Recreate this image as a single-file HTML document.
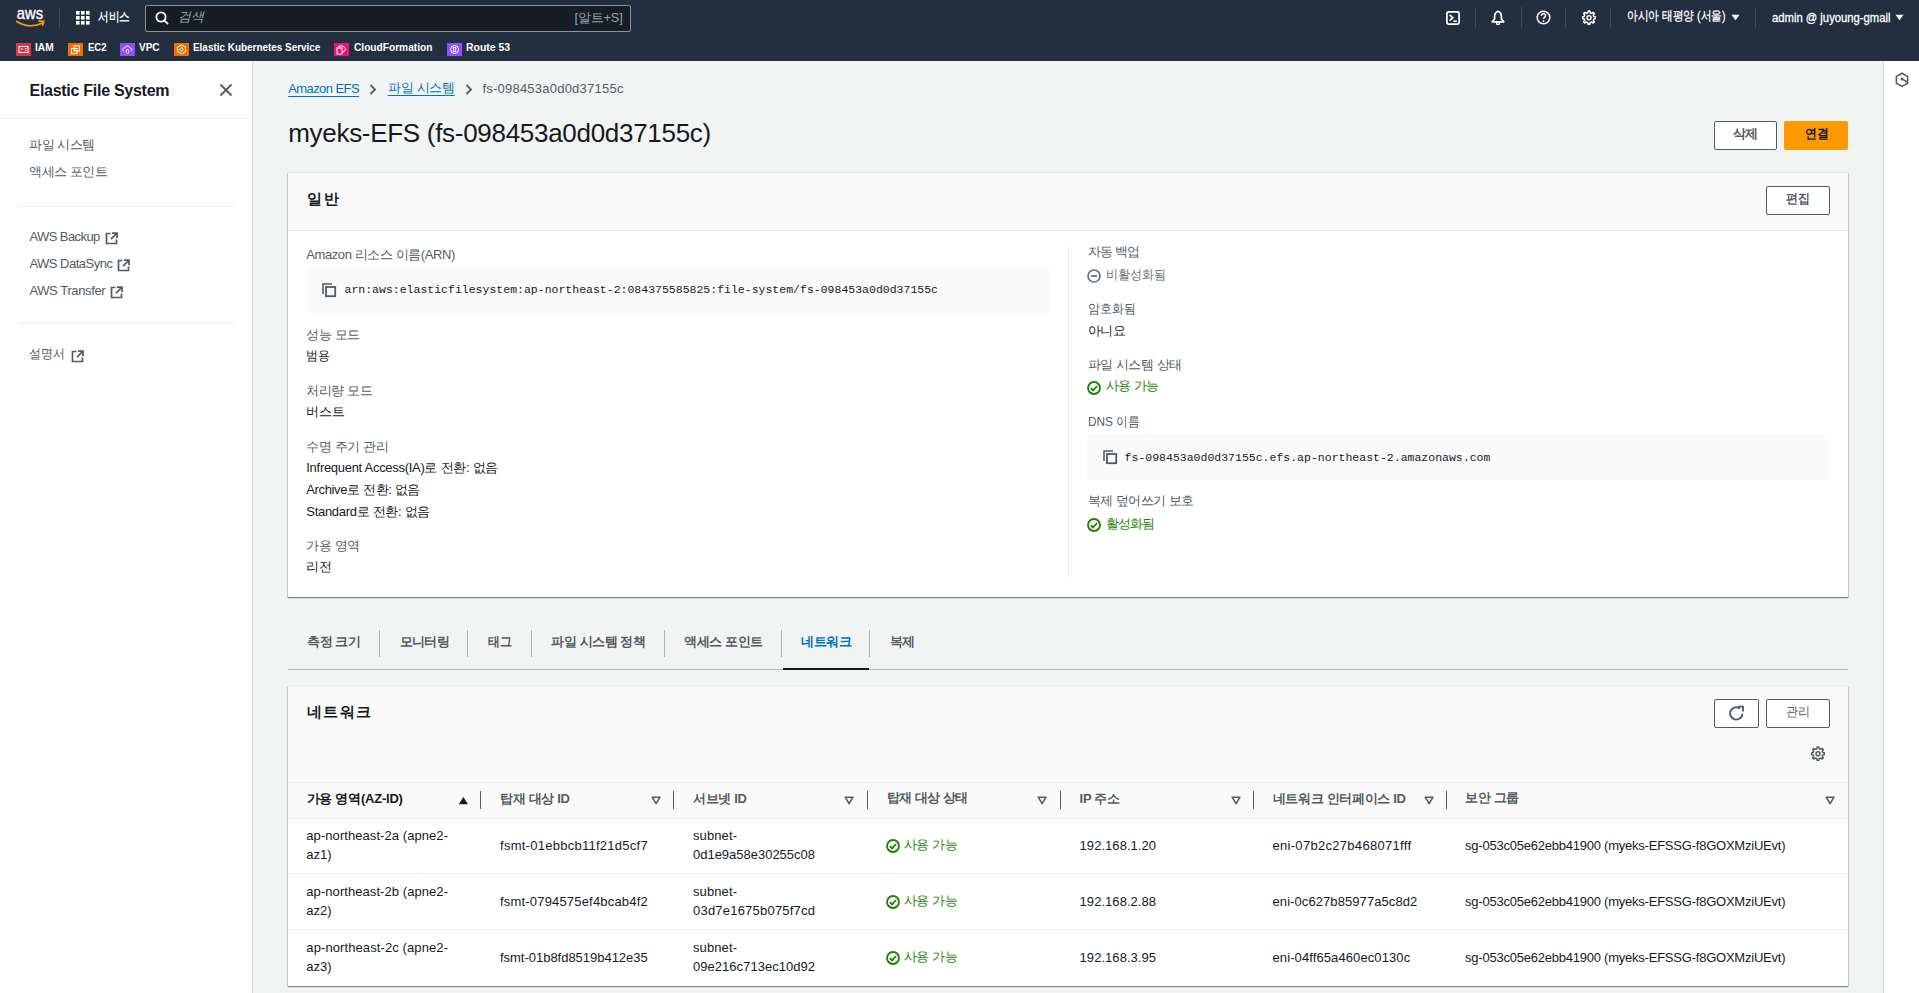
<!DOCTYPE html><html><head><meta charset="utf-8"><title>EFS</title><style>html,body{margin:0;padding:0;width:1919px;height:993px;overflow:hidden;background:#f2f3f3;font-family:"Liberation Sans",sans-serif}.t{position:absolute;white-space:nowrap}.b{position:absolute;display:block}</style></head><body><div class="b" style="left:0px;top:0px;width:1919px;height:61px;background:#232f3e"></div>
<div class="b" style="left:0px;top:61px;width:1919px;height:1px;background:rgba(35,47,62,0.5)"></div>
<svg class="b" style="left:16px;top:4px;" width="30" height="26" viewBox="0 0 30 26"><text x="0.8" y="14.9" fill="#fff" font-family="Liberation Sans" font-size="17" stroke="#fff" stroke-width="0.35" textLength="26.2" lengthAdjust="spacingAndGlyphs">aws</text><path d="M0.6 17.4 Q13.5 25.2 26.6 19" stroke="#ff9900" stroke-width="1.7" fill="none" stroke-linecap="round"/><path d="M22.9 17.1 L28 17.4 L26.6 21.3" stroke="#ff9900" stroke-width="1.6" fill="none" stroke-linecap="round" stroke-linejoin="round"/></svg>
<div class="b" style="left:59px;top:8px;width:1px;height:20px;background:#414d5c"></div>
<svg class="b" style="left:76px;top:11px;" width="14" height="14" viewBox="0 0 14 14"><rect x="0" y="0" width="3.6" height="3.6" fill="#fff"/><rect x="5" y="0" width="3.6" height="3.6" fill="#fff"/><rect x="10" y="0" width="3.6" height="3.6" fill="#fff"/><rect x="0" y="5" width="3.6" height="3.6" fill="#fff"/><rect x="5" y="5" width="3.6" height="3.6" fill="#fff"/><rect x="10" y="5" width="3.6" height="3.6" fill="#fff"/><rect x="0" y="10" width="3.6" height="3.6" fill="#fff"/><rect x="5" y="10" width="3.6" height="3.6" fill="#fff"/><rect x="10" y="10" width="3.6" height="3.6" fill="#fff"/></svg>
<div id="t1" class="t" style="left:98px;top:9.70px;font-size:13px;line-height:13px;font-weight:normal;color:#fff;font-family:'Liberation Sans', sans-serif;-webkit-text-stroke:0.3px #fff;transform:scaleX(0.8205);transform-origin:0 0;">서비스</div>
<div class="b" style="left:145px;top:5px;width:486px;height:27px;background:#161d26;border:1px solid #879596;border-radius:2px;box-sizing:border-box"></div>
<svg class="b" style="left:155px;top:11px;" width="14" height="14" viewBox="0 0 14 14"><circle cx="6" cy="6" r="4.6" stroke="#fff" stroke-width="1.8" fill="none"/><path d="M9.4 9.4 L12.6 12.6" stroke="#fff" stroke-width="1.8" stroke-linecap="round"/></svg>
<div id="t2" class="t" style="left:178px;top:9.70px;font-size:13px;line-height:13px;font-weight:normal;color:#95a5a6;font-family:'Liberation Sans', sans-serif;font-style:italic;letter-spacing:-0.400px;">검색</div>
<div id="t3" class="t" style="left:574.4px;top:11.30px;font-size:13px;line-height:13px;font-weight:normal;color:#95a5a6;font-family:'Liberation Sans', sans-serif;letter-spacing:-0.200px;">[알트+S]</div>
<svg class="b" style="left:1446px;top:11px;" width="14" height="14" viewBox="0 0 14 14"><rect x="0.9" y="0.9" width="12.2" height="12.2" rx="1.6" stroke="#fff" stroke-width="1.7" fill="none"/><path d="M3.6 3.9 L6.9 6.8 L3.6 9.7" stroke="#fff" stroke-width="1.6" fill="none"/><path d="M7.4 10.2 H10.8" stroke="#fff" stroke-width="1.6"/></svg>
<div class="b" style="left:1475px;top:8px;width:1px;height:20px;background:#414d5c"></div>
<svg class="b" style="left:1491px;top:10px;" width="14" height="15" viewBox="0 0 14 15"><path d="M7 1.3 C4.6 2.2 3.6 4.2 3.6 6.6 V9 L1.2 11.8 H12.8 L10.4 9 V6.6 C10.4 4.2 9.4 2.2 7 1.3 Z" stroke="#fff" stroke-width="1.7" fill="none" stroke-linejoin="round"/><circle cx="7" cy="13.1" r="1.5" stroke="#fff" stroke-width="1.4" fill="none"/></svg>
<div class="b" style="left:1521px;top:7px;width:1px;height:21px;background:#414d5c"></div>
<svg class="b" style="left:1536px;top:10px;" width="15" height="15" viewBox="0 0 15 15"><circle cx="7.5" cy="7.5" r="6.3" stroke="#fff" stroke-width="1.6" fill="none"/><path d="M5.4 5.8 C5.4 3.2 9.6 3.2 9.6 5.6 C9.6 7.3 7.5 7.3 7.5 9" stroke="#fff" stroke-width="1.5" fill="none"/><circle cx="7.5" cy="11.2" r="0.9" fill="#fff"/></svg>
<div class="b" style="left:1565px;top:8px;width:1px;height:20px;background:#414d5c"></div>
<svg class="b" style="left:1582px;top:10px;" width="14" height="16" viewBox="0 0 14 16"><path d="M6.2 1 H7.8 L8.2 2.8 L9.6 3.4 L11.2 2.4 L12.3 3.5 L11.3 5.1 L11.9 6.5 L13.6 6.9 V8.5 L11.9 8.9 L11.3 10.3 L12.3 11.9 L11.2 13 L9.6 12 L8.2 12.6 L7.8 14.3 H6.2 L5.8 12.6 L4.4 12 L2.8 13 L1.7 11.9 L2.7 10.3 L2.1 8.9 L0.4 8.5 V6.9 L2.1 6.5 L2.7 5.1 L1.7 3.5 L2.8 2.4 L4.4 3.4 L5.8 2.8 Z" stroke="#fff" stroke-width="1.5" fill="none" stroke-linejoin="round"/><circle cx="7" cy="7.65" r="2" stroke="#fff" stroke-width="1.5" fill="none"/></svg>
<div class="b" style="left:1610px;top:8px;width:1px;height:20px;background:#414d5c"></div>
<div id="t4" class="t" style="left:1627.4px;top:9.20px;font-size:13px;line-height:13px;font-weight:normal;color:#fff;font-family:'Liberation Sans', sans-serif;-webkit-text-stroke:0.3px #fff;transform:scaleX(0.8224);transform-origin:0 0;">아시아 태평양 (서울)</div>
<svg class="b" style="left:1731px;top:14px;" width="9" height="7" viewBox="0 0 9 7"><path d="M0.5 0.8 H8.5 L4.5 6.2 Z" fill="#fff"/></svg>
<div class="b" style="left:1755px;top:8px;width:1px;height:20px;background:#414d5c"></div>
<div id="t5" class="t" style="left:1771.5px;top:11.00px;font-size:13px;line-height:13px;font-weight:normal;color:#fff;font-family:'Liberation Sans', sans-serif;-webkit-text-stroke:0.3px #fff;transform:scaleX(0.8664);transform-origin:0 0;">admin @ juyoung-gmail</div>
<svg class="b" style="left:1895px;top:14px;" width="9" height="7" viewBox="0 0 9 7"><path d="M0.5 0.8 H8.5 L4.5 6.2 Z" fill="#fff"/></svg>
<svg class="b" style="left:16px;top:43px;" width="15" height="13" viewBox="0 0 15 13"><rect width="15" height="13" fill="#dd344c"/><rect x="3" y="3.5" width="9" height="6" stroke="#fff" stroke-width="1" fill="none"/><path d="M5 6 H7 M9 5.5 H10.5 M9 7.5 H10.5" stroke="#fff" stroke-width="0.9"/></svg>
<div id="t6" class="t" style="left:35.4px;top:42.27px;font-size:11.5px;line-height:11.5px;font-weight:bold;color:#fff;font-family:'Liberation Sans', sans-serif;transform:scaleX(0.8818);transform-origin:0 0;">IAM</div>
<svg class="b" style="left:68px;top:43px;" width="15" height="13" viewBox="0 0 15 13"><rect width="15" height="13" fill="#ed7100"/><rect x="6" y="3" width="5.5" height="5" stroke="#fff" stroke-width="1" fill="none"/><rect x="3.5" y="5.5" width="5.5" height="5" stroke="#fff" stroke-width="1" fill="none"/></svg>
<div id="t7" class="t" style="left:87.5px;top:42.27px;font-size:11.5px;line-height:11.5px;font-weight:bold;color:#fff;font-family:'Liberation Sans', sans-serif;transform:scaleX(0.8268);transform-origin:0 0;">EC2</div>
<svg class="b" style="left:120px;top:43px;" width="15" height="13" viewBox="0 0 15 13"><rect width="15" height="13" fill="#8c4fff"/><path d="M4 8 C2 8 2 5 4.5 5 C5 2.5 9.5 2.5 10 5 C12.5 5 12.5 8 10.5 8" stroke="#fff" stroke-width="1" fill="none"/><rect x="6.3" y="6.5" width="2.4" height="4" rx="1" stroke="#fff" stroke-width="0.9" fill="none"/></svg>
<div id="t8" class="t" style="left:139px;top:42.27px;font-size:11.5px;line-height:11.5px;font-weight:bold;color:#fff;font-family:'Liberation Sans', sans-serif;transform:scaleX(0.8708);transform-origin:0 0;">VPC</div>
<svg class="b" style="left:174px;top:43px;" width="15" height="13" viewBox="0 0 15 13"><rect width="15" height="13" fill="#ed7100"/><path d="M7.5 2 L11.5 4.2 V8.8 L7.5 11 L3.5 8.8 V4.2 Z" stroke="#fff" stroke-width="1" fill="none"/><circle cx="7.5" cy="6.5" r="1.6" stroke="#fff" stroke-width="0.9" fill="none"/></svg>
<div id="t9" class="t" style="left:192.8px;top:42.27px;font-size:11.5px;line-height:11.5px;font-weight:bold;color:#fff;font-family:'Liberation Sans', sans-serif;transform:scaleX(0.8627);transform-origin:0 0;">Elastic Kubernetes Service</div>
<svg class="b" style="left:334px;top:43px;" width="15" height="13" viewBox="0 0 15 13"><rect width="15" height="13" fill="#e7157b"/><rect x="3" y="5" width="5" height="6" stroke="#fff" stroke-width="1" fill="none"/><path d="M5 5 V3 H9 L12 6.5 L9 9 H8" stroke="#fff" stroke-width="1" fill="none"/></svg>
<div id="t10" class="t" style="left:353.6px;top:42.27px;font-size:11.5px;line-height:11.5px;font-weight:bold;color:#fff;font-family:'Liberation Sans', sans-serif;transform:scaleX(0.8829);transform-origin:0 0;">CloudFormation</div>
<svg class="b" style="left:447px;top:43px;" width="15" height="13" viewBox="0 0 15 13"><rect width="15" height="13" fill="#8c4fff"/><circle cx="7.5" cy="6.5" r="4" stroke="#fff" stroke-width="1" fill="none"/><rect x="6.3" y="4.5" width="2.4" height="4" stroke="#fff" stroke-width="0.9" fill="none"/></svg>
<div id="t11" class="t" style="left:465.7px;top:42.27px;font-size:11.5px;line-height:11.5px;font-weight:bold;color:#fff;font-family:'Liberation Sans', sans-serif;transform:scaleX(0.9099);transform-origin:0 0;">Route 53</div>
<div class="b" style="left:0px;top:61px;width:252px;height:932px;background:#fff"></div>
<div class="b" style="left:252px;top:61px;width:1px;height:932px;background:#d5dbdb"></div>
<div id="t12" class="t" style="left:29.5px;top:82.96px;font-size:16px;line-height:16px;font-weight:bold;color:#16191f;font-family:'Liberation Sans', sans-serif;letter-spacing:-0.276px;">Elastic File System</div>
<svg class="b" style="left:219px;top:83px;" width="14" height="14" viewBox="0 0 14 14"><path d="M1.5 1.5 L12.5 12.5 M12.5 1.5 L1.5 12.5" stroke="#545b64" stroke-width="1.8"/></svg>
<div class="b" style="left:0px;top:118px;width:252px;height:1px;background:#eaeded"></div>
<div id="t13" class="t" style="left:29.4px;top:138.20px;font-size:13px;line-height:13px;font-weight:normal;color:#545b64;font-family:'Liberation Sans', sans-serif;letter-spacing:-0.605px;">파일 시스템</div>
<div id="t14" class="t" style="left:29.4px;top:165.20px;font-size:13px;line-height:13px;font-weight:normal;color:#545b64;font-family:'Liberation Sans', sans-serif;letter-spacing:-0.504px;">액세스 포인트</div>
<div class="b" style="left:18px;top:206px;width:216px;height:1px;background:#eaeded"></div>
<div id="t15" class="t" style="left:29.4px;top:230.00px;font-size:13px;line-height:13px;font-weight:normal;color:#545b64;font-family:'Liberation Sans', sans-serif;letter-spacing:-0.579px;">AWS Backup</div>
<svg class="b" style="left:105px;top:232px;" width="13" height="13" viewBox="0 0 13 13"><path d="M5.5 1.5 H1.5 V11.5 H11.5 V7.5" stroke="#545b64" stroke-width="1.7" fill="none"/><path d="M7 1.2 H12 V6.2 M11.8 1.4 L6 7.2" stroke="#545b64" stroke-width="1.7" fill="none"/></svg>
<div id="t16" class="t" style="left:29.4px;top:257.00px;font-size:13px;line-height:13px;font-weight:normal;color:#545b64;font-family:'Liberation Sans', sans-serif;letter-spacing:-0.510px;">AWS DataSync</div>
<svg class="b" style="left:117px;top:259px;" width="13" height="13" viewBox="0 0 13 13"><path d="M5.5 1.5 H1.5 V11.5 H11.5 V7.5" stroke="#545b64" stroke-width="1.7" fill="none"/><path d="M7 1.2 H12 V6.2 M11.8 1.4 L6 7.2" stroke="#545b64" stroke-width="1.7" fill="none"/></svg>
<div id="t17" class="t" style="left:29.4px;top:284.00px;font-size:13px;line-height:13px;font-weight:normal;color:#545b64;font-family:'Liberation Sans', sans-serif;letter-spacing:-0.385px;">AWS Transfer</div>
<svg class="b" style="left:110px;top:286px;" width="13" height="13" viewBox="0 0 13 13"><path d="M5.5 1.5 H1.5 V11.5 H11.5 V7.5" stroke="#545b64" stroke-width="1.7" fill="none"/><path d="M7 1.2 H12 V6.2 M11.8 1.4 L6 7.2" stroke="#545b64" stroke-width="1.7" fill="none"/></svg>
<div class="b" style="left:18px;top:323px;width:216px;height:1px;background:#eaeded"></div>
<div id="t18" class="t" style="left:29.4px;top:347.20px;font-size:13px;line-height:13px;font-weight:normal;color:#545b64;font-family:'Liberation Sans', sans-serif;transform:scaleX(0.9231);transform-origin:0 0;">설명서</div>
<svg class="b" style="left:71px;top:350px;" width="13" height="13" viewBox="0 0 13 13"><path d="M5.5 1.5 H1.5 V11.5 H11.5 V7.5" stroke="#545b64" stroke-width="1.7" fill="none"/><path d="M7 1.2 H12 V6.2 M11.8 1.4 L6 7.2" stroke="#545b64" stroke-width="1.7" fill="none"/></svg>
<div class="b" style="left:253px;top:61px;width:1630px;height:932px;background:#f2f3f3"></div>
<div class="b" style="left:1883px;top:61px;width:1px;height:932px;background:#d5dbdb"></div>
<div class="b" style="left:1884px;top:61px;width:35px;height:932px;background:#fff"></div>
<svg class="b" style="left:1895px;top:72px;" width="14" height="16" viewBox="0 0 14 16"><path d="M7 1.2 L12.6 4.4 V11.2 L7 14.4 L1.4 11.2 V4.4 Z" stroke="#545b64" stroke-width="1.6" fill="none" stroke-linejoin="round"/><circle cx="7" cy="6.9" r="1.5" fill="#545b64"/><path d="M7 6.9 L12 10" stroke="#545b64" stroke-width="1.5"/></svg>
<div id="t19" class="t" style="left:288.2px;top:82.00px;font-size:13px;line-height:13px;font-weight:normal;color:#0073bb;font-family:'Liberation Sans', sans-serif;text-decoration:underline;text-underline-offset:3px;letter-spacing:-0.577px;">Amazon EFS</div>
<svg class="b" style="left:369px;top:84px;" width="8" height="11" viewBox="0 0 8 11"><path d="M1.5 1 L6 5.5 L1.5 10" stroke="#545b64" stroke-width="1.8" fill="none"/></svg>
<div id="t20" class="t" style="left:387.8px;top:80.70px;font-size:13px;line-height:13px;font-weight:normal;color:#0073bb;font-family:'Liberation Sans', sans-serif;text-decoration:underline;text-underline-offset:3px;letter-spacing:-0.285px;">파일 시스템</div>
<svg class="b" style="left:464.5px;top:84px;" width="8" height="11" viewBox="0 0 8 11"><path d="M1.5 1 L6 5.5 L1.5 10" stroke="#545b64" stroke-width="1.8" fill="none"/></svg>
<div id="t21" class="t" style="left:482.4px;top:82.00px;font-size:13px;line-height:13px;font-weight:normal;color:#545b64;font-family:'Liberation Sans', sans-serif;letter-spacing:0.230px;">fs-098453a0d0d37155c</div>
<div id="t22" class="t" style="left:288.2px;top:120.49px;font-size:26px;line-height:26px;font-weight:normal;color:#16191f;font-family:'Liberation Sans', sans-serif;letter-spacing:-0.294px;">myeks-EFS (fs-098453a0d0d37155c)</div>
<div class="b" style="left:1714px;top:121px;width:63px;height:29px;background:#fff;border:1px solid #545b64;border-radius:2px;box-sizing:border-box"></div>
<div id="t23" class="t" style="left:1733.2px;top:126.70px;font-size:13px;line-height:13px;font-weight:bold;color:#545b64;font-family:'Liberation Sans', sans-serif;letter-spacing:-0.700px;">삭제</div>
<div class="b" style="left:1784px;top:121px;width:64px;height:29px;background:#ff9900;border-radius:2px"></div>
<div id="t24" class="t" style="left:1804.6px;top:126.70px;font-size:13px;line-height:13px;font-weight:bold;color:#16191f;font-family:'Liberation Sans', sans-serif;transform:scaleX(0.9115);transform-origin:0 0;">연결</div>
<div class="b" style="left:288px;top:172px;width:1560px;height:425px;background:#fff;box-shadow:0 1px 1px 0 rgba(0,28,36,.3),1px 1px 1px 0 rgba(0,28,36,.15),-1px 1px 1px 0 rgba(0,28,36,.15);border-top:1px solid #eaeded;box-sizing:border-box;"></div>
<div class="b" style="left:288px;top:173px;width:1560px;height:57px;background:#fafafa"></div>
<div class="b" style="left:288px;top:230px;width:1560px;height:1px;background:#eaeded"></div>
<div id="t25" class="t" style="left:307.2px;top:192.22px;font-size:14.5px;line-height:14.5px;font-weight:bold;color:#16191f;font-family:'Liberation Sans', sans-serif;letter-spacing:1.700px;">일반</div>
<div class="b" style="left:1766px;top:186px;width:64px;height:29px;background:#fff;border:1px solid #545b64;border-radius:2px;box-sizing:border-box"></div>
<div id="t26" class="t" style="left:1785.5px;top:191.70px;font-size:13px;line-height:13px;font-weight:bold;color:#545b64;font-family:'Liberation Sans', sans-serif;transform:scaleX(0.9231);transform-origin:0 0;">편집</div>
<div id="t27" class="t" style="left:306.3px;top:247.50px;font-size:13px;line-height:13px;font-weight:normal;color:#545b64;font-family:'Liberation Sans', sans-serif;letter-spacing:-0.414px;">Amazon 리소스 이름(ARN)</div>
<div class="b" style="left:306px;top:267px;width:744px;height:46px;background:#fafafa;border-radius:4px"></div>
<svg class="b" style="left:322px;top:283px;" width="15" height="15" viewBox="0 0 15 15"><path d="M1 11 V1 H10" stroke="#545b64" stroke-width="1.6" fill="none"/><rect x="4" y="4" width="9.2" height="9.2" stroke="#545b64" stroke-width="1.8" fill="none"/></svg>
<div id="t28" class="t" style="left:344.5px;top:283.79px;font-size:11.5px;line-height:11.5px;font-weight:normal;color:#16191f;font-family:'Liberation Mono', monospace;">arn:aws:elasticfilesystem:ap-northeast-2:084375585825:file-system/fs-098453a0d0d37155c</div>
<div id="t29" class="t" style="left:306.3px;top:327.70px;font-size:13px;line-height:13px;font-weight:normal;color:#545b64;font-family:'Liberation Sans', sans-serif;letter-spacing:-0.406px;">성능 모드</div>
<div id="t30" class="t" style="left:306.3px;top:349.20px;font-size:13px;line-height:13px;font-weight:normal;color:#16191f;font-family:'Liberation Sans', sans-serif;transform:scaleX(0.9231);transform-origin:0 0;">범용</div>
<div id="t31" class="t" style="left:306.3px;top:384.20px;font-size:13px;line-height:13px;font-weight:normal;color:#545b64;font-family:'Liberation Sans', sans-serif;letter-spacing:-0.425px;">처리량 모드</div>
<div id="t32" class="t" style="left:306.3px;top:405.20px;font-size:13px;line-height:13px;font-weight:normal;color:#16191f;font-family:'Liberation Sans', sans-serif;letter-spacing:-0.250px;">버스트</div>
<div id="t33" class="t" style="left:306.3px;top:440.20px;font-size:13px;line-height:13px;font-weight:normal;color:#545b64;font-family:'Liberation Sans', sans-serif;letter-spacing:-0.391px;">수명 주기 관리</div>
<div id="t34" class="t" style="left:306.3px;top:461.00px;font-size:13px;line-height:13px;font-weight:normal;color:#16191f;font-family:'Liberation Sans', sans-serif;letter-spacing:-0.290px;">Infrequent Access(IA)로 전환: 없음</div>
<div id="t35" class="t" style="left:306.3px;top:483.00px;font-size:13px;line-height:13px;font-weight:normal;color:#16191f;font-family:'Liberation Sans', sans-serif;letter-spacing:-0.371px;">Archive로 전환: 없음</div>
<div id="t36" class="t" style="left:306.3px;top:504.50px;font-size:13px;line-height:13px;font-weight:normal;color:#16191f;font-family:'Liberation Sans', sans-serif;letter-spacing:-0.307px;">Standard로 전환: 없음</div>
<div id="t37" class="t" style="left:306.3px;top:539.20px;font-size:13px;line-height:13px;font-weight:normal;color:#545b64;font-family:'Liberation Sans', sans-serif;letter-spacing:-0.406px;">가용 영역</div>
<div id="t38" class="t" style="left:306.3px;top:560.20px;font-size:13px;line-height:13px;font-weight:normal;color:#16191f;font-family:'Liberation Sans', sans-serif;letter-spacing:-0.700px;">리전</div>
<div class="b" style="left:1068px;top:245px;width:1px;height:333px;background:#eaeded"></div>
<div id="t39" class="t" style="left:1087.5px;top:245.20px;font-size:13px;line-height:13px;font-weight:normal;color:#545b64;font-family:'Liberation Sans', sans-serif;letter-spacing:-0.656px;">자동 백업</div>
<svg class="b" style="left:1087px;top:269px;" width="14" height="14" viewBox="0 0 14 14"><circle cx="7" cy="7" r="6" stroke="#687078" stroke-width="1.7" fill="none"/><path d="M4 7 H10" stroke="#687078" stroke-width="1.8"/></svg>
<div id="t40" class="t" style="left:1105.8px;top:267.50px;font-size:13px;line-height:13px;font-weight:normal;color:#687078;font-family:'Liberation Sans', sans-serif;transform:scaleX(0.9292);transform-origin:0 0;">비활성화됨</div>
<div id="t41" class="t" style="left:1087.5px;top:301.70px;font-size:13px;line-height:13px;font-weight:normal;color:#545b64;font-family:'Liberation Sans', sans-serif;transform:scaleX(0.9231);transform-origin:0 0;">암호화됨</div>
<div id="t42" class="t" style="left:1087.5px;top:323.70px;font-size:13px;line-height:13px;font-weight:normal;color:#16191f;font-family:'Liberation Sans', sans-serif;letter-spacing:-0.500px;">아니요</div>
<div id="t43" class="t" style="left:1087.5px;top:357.70px;font-size:13px;line-height:13px;font-weight:normal;color:#545b64;font-family:'Liberation Sans', sans-serif;letter-spacing:-0.454px;">파일 시스템 상태</div>
<svg class="b" style="left:1087px;top:381px;" width="14" height="14" viewBox="0 0 14 14"><circle cx="7" cy="7" r="6" stroke="#1d8102" stroke-width="1.8" fill="none"/><path d="M3.8 7.2 L6 9.4 L10.2 5" stroke="#1d8102" stroke-width="1.8" fill="none"/></svg>
<div id="t44" class="t" style="left:1105.5px;top:378.70px;font-size:13px;line-height:13px;font-weight:normal;color:#1d8102;font-family:'Liberation Sans', sans-serif;letter-spacing:-0.456px;">사용 가능</div>
<div id="t45" class="t" style="left:1087.5px;top:414.50px;font-size:13px;line-height:13px;font-weight:normal;color:#545b64;font-family:'Liberation Sans', sans-serif;transform:scaleX(0.9113);transform-origin:0 0;">DNS 이름</div>
<div class="b" style="left:1087px;top:434px;width:743px;height:46px;background:#fafafa;border-radius:4px"></div>
<svg class="b" style="left:1103px;top:450px;" width="15" height="15" viewBox="0 0 15 15"><path d="M1 11 V1 H10" stroke="#545b64" stroke-width="1.6" fill="none"/><rect x="4" y="4" width="9.2" height="9.2" stroke="#545b64" stroke-width="1.8" fill="none"/></svg>
<div id="t46" class="t" style="left:1124.6px;top:451.79px;font-size:11.5px;line-height:11.5px;font-weight:normal;color:#16191f;font-family:'Liberation Mono', monospace;">fs-098453a0d0d37155c.efs.ap-northeast-2.amazonaws.com</div>
<div id="t47" class="t" style="left:1087.5px;top:494.20px;font-size:13px;line-height:13px;font-weight:normal;color:#545b64;font-family:'Liberation Sans', sans-serif;letter-spacing:-0.515px;">복제 덮어쓰기 보호</div>
<svg class="b" style="left:1087px;top:518px;" width="14" height="14" viewBox="0 0 14 14"><circle cx="7" cy="7" r="6" stroke="#1d8102" stroke-width="1.8" fill="none"/><path d="M3.8 7.2 L6 9.4 L10.2 5" stroke="#1d8102" stroke-width="1.8" fill="none"/></svg>
<div id="t48" class="t" style="left:1105.8px;top:516.70px;font-size:13px;line-height:13px;font-weight:normal;color:#1d8102;font-family:'Liberation Sans', sans-serif;letter-spacing:-0.767px;">활성화됨</div>
<div id="t49" class="t" style="left:307.4px;top:634.70px;font-size:13px;line-height:13px;font-weight:bold;color:#545b64;font-family:'Liberation Sans', sans-serif;letter-spacing:-0.506px;">측정 크기</div>
<div id="t50" class="t" style="left:399.7px;top:634.70px;font-size:13px;line-height:13px;font-weight:bold;color:#545b64;font-family:'Liberation Sans', sans-serif;letter-spacing:-0.600px;">모니터링</div>
<div id="t51" class="t" style="left:488.3px;top:634.70px;font-size:13px;line-height:13px;font-weight:bold;color:#545b64;font-family:'Liberation Sans', sans-serif;transform:scaleX(0.9192);transform-origin:0 0;">태그</div>
<div id="t52" class="t" style="left:551.3px;top:634.70px;font-size:13px;line-height:13px;font-weight:bold;color:#545b64;font-family:'Liberation Sans', sans-serif;letter-spacing:-0.442px;">파일 시스템 정책</div>
<div id="t53" class="t" style="left:684.2px;top:634.70px;font-size:13px;line-height:13px;font-weight:bold;color:#545b64;font-family:'Liberation Sans', sans-serif;letter-spacing:-0.421px;">액세스 포인트</div>
<div id="t54" class="t" style="left:801.4px;top:634.70px;font-size:13px;line-height:13px;font-weight:bold;color:#0073bb;font-family:'Liberation Sans', sans-serif;letter-spacing:-0.467px;">네트워크</div>
<div id="t55" class="t" style="left:889.7px;top:634.70px;font-size:13px;line-height:13px;font-weight:bold;color:#545b64;font-family:'Liberation Sans', sans-serif;letter-spacing:-0.300px;">복제</div>
<div class="b" style="left:379px;top:630px;width:1px;height:27px;background:#aab7b8"></div>
<div class="b" style="left:467px;top:630px;width:1px;height:27px;background:#aab7b8"></div>
<div class="b" style="left:531px;top:630px;width:1px;height:27px;background:#aab7b8"></div>
<div class="b" style="left:664px;top:630px;width:1px;height:27px;background:#aab7b8"></div>
<div class="b" style="left:781px;top:630px;width:1px;height:27px;background:#aab7b8"></div>
<div class="b" style="left:869px;top:630px;width:1px;height:27px;background:#aab7b8"></div>
<div class="b" style="left:288px;top:669px;width:1560px;height:1px;background:#aab7b8"></div>
<div class="b" style="left:783px;top:668px;width:86px;height:2px;background:#16191f"></div>
<div class="b" style="left:288px;top:686px;width:1560px;height:300px;background:#fff;box-shadow:0 1px 1px 0 rgba(0,28,36,.3),1px 1px 1px 0 rgba(0,28,36,.15),-1px 1px 1px 0 rgba(0,28,36,.15);border-top:1px solid #eaeded;box-sizing:border-box;"></div>
<div class="b" style="left:288px;top:687px;width:1560px;height:131px;background:#fafafa"></div>
<div id="t56" class="t" style="left:306.9px;top:705.22px;font-size:14.5px;line-height:14.5px;font-weight:bold;color:#16191f;font-family:'Liberation Sans', sans-serif;letter-spacing:1.333px;">네트워크</div>
<div class="b" style="left:1714px;top:699px;width:45px;height:29px;background:#fff;border:1px solid #545b64;border-radius:2px;box-sizing:border-box"></div>
<svg class="b" style="left:1729px;top:705px;" width="16" height="16" viewBox="0 0 16 16"><path d="M13.5 8.6 A6.2 6.2 0 1 1 11.2 3.6" stroke="#545b64" stroke-width="1.9" fill="none"/><path d="M9.2 1.6 H14 V6.4" stroke="#545b64" stroke-width="1.9" fill="none"/></svg>
<div class="b" style="left:1766px;top:699px;width:64px;height:29px;background:#fff;border:1px solid #545b64;border-radius:2px;box-sizing:border-box"></div>
<div id="t57" class="t" style="left:1785.8px;top:705.20px;font-size:13px;line-height:13px;font-weight:normal;color:#545b64;font-family:'Liberation Sans', sans-serif;transform:scaleX(0.9308);transform-origin:0 0;">관리</div>
<svg class="b" style="left:1811px;top:746px;" width="14" height="16" viewBox="0 0 14 16"><path d="M6.2 1 H7.8 L8.2 2.8 L9.6 3.4 L11.2 2.4 L12.3 3.5 L11.3 5.1 L11.9 6.5 L13.6 6.9 V8.5 L11.9 8.9 L11.3 10.3 L12.3 11.9 L11.2 13 L9.6 12 L8.2 12.6 L7.8 14.3 H6.2 L5.8 12.6 L4.4 12 L2.8 13 L1.7 11.9 L2.7 10.3 L2.1 8.9 L0.4 8.5 V6.9 L2.1 6.5 L2.7 5.1 L1.7 3.5 L2.8 2.4 L4.4 3.4 L5.8 2.8 Z" stroke="#545b64" stroke-width="1.5" fill="none" stroke-linejoin="round"/><circle cx="7" cy="7.65" r="2" stroke="#545b64" stroke-width="1.5" fill="none"/></svg>
<div class="b" style="left:288px;top:782px;width:1560px;height:1px;background:#eaeded"></div>
<div class="b" style="left:288px;top:818px;width:1560px;height:1px;background:#eaeded"></div>
<div id="t58" class="t" style="left:306.6px;top:792.20px;font-size:13px;line-height:13px;font-weight:bold;color:#16191f;font-family:'Liberation Sans', sans-serif;letter-spacing:-0.240px;">가용 영역(AZ-ID)</div>
<div id="t59" class="t" style="left:500.4px;top:792.20px;font-size:13px;line-height:13px;font-weight:bold;color:#545b64;font-family:'Liberation Sans', sans-serif;letter-spacing:-0.376px;">탑재 대상 ID</div>
<div id="t60" class="t" style="left:693px;top:792.20px;font-size:13px;line-height:13px;font-weight:bold;color:#545b64;font-family:'Liberation Sans', sans-serif;letter-spacing:-0.325px;">서브넷 ID</div>
<div id="t61" class="t" style="left:886.6px;top:791.40px;font-size:13px;line-height:13px;font-weight:bold;color:#545b64;font-family:'Liberation Sans', sans-serif;letter-spacing:-0.505px;">탑재 대상 상태</div>
<div id="t62" class="t" style="left:1079.6px;top:792.20px;font-size:13px;line-height:13px;font-weight:bold;color:#545b64;font-family:'Liberation Sans', sans-serif;letter-spacing:-0.268px;">IP 주소</div>
<div id="t63" class="t" style="left:1272.5px;top:792.20px;font-size:13px;line-height:13px;font-weight:bold;color:#545b64;font-family:'Liberation Sans', sans-serif;letter-spacing:-0.311px;">네트워크 인터페이스 ID</div>
<div id="t64" class="t" style="left:1465px;top:791.40px;font-size:13px;line-height:13px;font-weight:bold;color:#545b64;font-family:'Liberation Sans', sans-serif;letter-spacing:-0.331px;">보안 그룹</div>
<svg class="b" style="left:458px;top:796px;" width="11" height="9" viewBox="0 0 11 9"><path d="M0.8 8.2 H10 L5.4 1 Z" fill="#16191f"/></svg>
<svg class="b" style="left:651px;top:796px;" width="10" height="9" viewBox="0 0 10 9"><path d="M1.2 1.2 H9 L5.1 7.6 Z" stroke="#545b64" stroke-width="1.6" fill="none" stroke-linejoin="round"/></svg>
<svg class="b" style="left:844px;top:796px;" width="10" height="9" viewBox="0 0 10 9"><path d="M1.2 1.2 H9 L5.1 7.6 Z" stroke="#545b64" stroke-width="1.6" fill="none" stroke-linejoin="round"/></svg>
<svg class="b" style="left:1037px;top:796px;" width="10" height="9" viewBox="0 0 10 9"><path d="M1.2 1.2 H9 L5.1 7.6 Z" stroke="#545b64" stroke-width="1.6" fill="none" stroke-linejoin="round"/></svg>
<svg class="b" style="left:1231px;top:796px;" width="10" height="9" viewBox="0 0 10 9"><path d="M1.2 1.2 H9 L5.1 7.6 Z" stroke="#545b64" stroke-width="1.6" fill="none" stroke-linejoin="round"/></svg>
<svg class="b" style="left:1424px;top:796px;" width="10" height="9" viewBox="0 0 10 9"><path d="M1.2 1.2 H9 L5.1 7.6 Z" stroke="#545b64" stroke-width="1.6" fill="none" stroke-linejoin="round"/></svg>
<svg class="b" style="left:1825px;top:796px;" width="10" height="9" viewBox="0 0 10 9"><path d="M1.2 1.2 H9 L5.1 7.6 Z" stroke="#545b64" stroke-width="1.6" fill="none" stroke-linejoin="round"/></svg>
<div class="b" style="left:480px;top:791px;width:1px;height:18px;background:#545b64"></div>
<div class="b" style="left:673px;top:791px;width:1px;height:18px;background:#545b64"></div>
<div class="b" style="left:867px;top:791px;width:1px;height:18px;background:#545b64"></div>
<div class="b" style="left:1060px;top:791px;width:1px;height:18px;background:#545b64"></div>
<div class="b" style="left:1253px;top:791px;width:1px;height:18px;background:#545b64"></div>
<div class="b" style="left:1446px;top:791px;width:1px;height:18px;background:#545b64"></div>
<div id="t65" class="t" style="left:306.3px;top:829.10px;font-size:13px;line-height:13px;font-weight:normal;color:#16191f;font-family:'Liberation Sans', sans-serif;letter-spacing:0.068px;">ap-northeast-2a (apne2-</div>
<div id="t66" class="t" style="left:306.3px;top:847.80px;font-size:13px;line-height:13px;font-weight:normal;color:#16191f;font-family:'Liberation Sans', sans-serif;">az1)</div>
<div id="t67" class="t" style="left:500px;top:839.10px;font-size:13px;line-height:13px;font-weight:normal;color:#16191f;font-family:'Liberation Sans', sans-serif;letter-spacing:0.265px;">fsmt-01ebbcb11f21d5cf7</div>
<div id="t68" class="t" style="left:693px;top:829.10px;font-size:13px;line-height:13px;font-weight:normal;color:#16191f;font-family:'Liberation Sans', sans-serif;letter-spacing:0.104px;">subnet-</div>
<div id="t69" class="t" style="left:693px;top:847.80px;font-size:13px;line-height:13px;font-weight:normal;color:#16191f;font-family:'Liberation Sans', sans-serif;letter-spacing:-0.012px;">0d1e9a58e30255c08</div>
<svg class="b" style="left:885.5px;top:839px;" width="14" height="14" viewBox="0 0 14 14"><circle cx="7" cy="7" r="6" stroke="#1d8102" stroke-width="1.8" fill="none"/><path d="M3.8 7.2 L6 9.4 L10.2 5" stroke="#1d8102" stroke-width="1.8" fill="none"/></svg>
<div id="t70" class="t" style="left:903.75px;top:838.10px;font-size:13px;line-height:13px;font-weight:normal;color:#1d8102;font-family:'Liberation Sans', sans-serif;letter-spacing:-0.406px;">사용 가능</div>
<div id="t71" class="t" style="left:1079.6px;top:839.10px;font-size:13px;line-height:13px;font-weight:normal;color:#16191f;font-family:'Liberation Sans', sans-serif;letter-spacing:0.045px;">192.168.1.20</div>
<div id="t72" class="t" style="left:1272.5px;top:839.10px;font-size:13px;line-height:13px;font-weight:normal;color:#16191f;font-family:'Liberation Sans', sans-serif;letter-spacing:0.298px;">eni-07b2c27b468071fff</div>
<div id="t73" class="t" style="left:1465px;top:839.10px;font-size:13px;line-height:13px;font-weight:normal;color:#16191f;font-family:'Liberation Sans', sans-serif;letter-spacing:-0.227px;">sg-053c05e62ebb41900 (myeks-EFSSG-f8GOXMziUEvt)</div>
<div class="b" style="left:288px;top:873px;width:1559px;height:1px;background:#eaeded"></div>
<div id="t74" class="t" style="left:306.3px;top:885.10px;font-size:13px;line-height:13px;font-weight:normal;color:#16191f;font-family:'Liberation Sans', sans-serif;letter-spacing:0.068px;">ap-northeast-2b (apne2-</div>
<div id="t75" class="t" style="left:306.3px;top:903.80px;font-size:13px;line-height:13px;font-weight:normal;color:#16191f;font-family:'Liberation Sans', sans-serif;">az2)</div>
<div id="t76" class="t" style="left:500px;top:895.10px;font-size:13px;line-height:13px;font-weight:normal;color:#16191f;font-family:'Liberation Sans', sans-serif;letter-spacing:0.184px;">fsmt-0794575ef4bcab4f2</div>
<div id="t77" class="t" style="left:693px;top:885.10px;font-size:13px;line-height:13px;font-weight:normal;color:#16191f;font-family:'Liberation Sans', sans-serif;letter-spacing:0.104px;">subnet-</div>
<div id="t78" class="t" style="left:693px;top:903.80px;font-size:13px;line-height:13px;font-weight:normal;color:#16191f;font-family:'Liberation Sans', sans-serif;letter-spacing:0.215px;">03d7e1675b075f7cd</div>
<svg class="b" style="left:885.5px;top:895px;" width="14" height="14" viewBox="0 0 14 14"><circle cx="7" cy="7" r="6" stroke="#1d8102" stroke-width="1.8" fill="none"/><path d="M3.8 7.2 L6 9.4 L10.2 5" stroke="#1d8102" stroke-width="1.8" fill="none"/></svg>
<div id="t79" class="t" style="left:903.75px;top:894.10px;font-size:13px;line-height:13px;font-weight:normal;color:#1d8102;font-family:'Liberation Sans', sans-serif;letter-spacing:-0.406px;">사용 가능</div>
<div id="t80" class="t" style="left:1079.6px;top:895.10px;font-size:13px;line-height:13px;font-weight:normal;color:#16191f;font-family:'Liberation Sans', sans-serif;letter-spacing:0.045px;">192.168.2.88</div>
<div id="t81" class="t" style="left:1272.5px;top:895.10px;font-size:13px;line-height:13px;font-weight:normal;color:#16191f;font-family:'Liberation Sans', sans-serif;letter-spacing:0.083px;">eni-0c627b85977a5c8d2</div>
<div id="t82" class="t" style="left:1465px;top:895.10px;font-size:13px;line-height:13px;font-weight:normal;color:#16191f;font-family:'Liberation Sans', sans-serif;letter-spacing:-0.227px;">sg-053c05e62ebb41900 (myeks-EFSSG-f8GOXMziUEvt)</div>
<div class="b" style="left:288px;top:929px;width:1559px;height:1px;background:#eaeded"></div>
<div id="t83" class="t" style="left:306.3px;top:941.10px;font-size:13px;line-height:13px;font-weight:normal;color:#16191f;font-family:'Liberation Sans', sans-serif;letter-spacing:0.101px;">ap-northeast-2c (apne2-</div>
<div id="t84" class="t" style="left:306.3px;top:959.80px;font-size:13px;line-height:13px;font-weight:normal;color:#16191f;font-family:'Liberation Sans', sans-serif;">az3)</div>
<div id="t85" class="t" style="left:500px;top:951.10px;font-size:13px;line-height:13px;font-weight:normal;color:#16191f;font-family:'Liberation Sans', sans-serif;letter-spacing:-0.023px;">fsmt-01b8fd8519b412e35</div>
<div id="t86" class="t" style="left:693px;top:941.10px;font-size:13px;line-height:13px;font-weight:normal;color:#16191f;font-family:'Liberation Sans', sans-serif;letter-spacing:0.104px;">subnet-</div>
<div id="t87" class="t" style="left:693px;top:959.80px;font-size:13px;line-height:13px;font-weight:normal;color:#16191f;font-family:'Liberation Sans', sans-serif;letter-spacing:0.034px;">09e216c713ec10d92</div>
<svg class="b" style="left:885.5px;top:951px;" width="14" height="14" viewBox="0 0 14 14"><circle cx="7" cy="7" r="6" stroke="#1d8102" stroke-width="1.8" fill="none"/><path d="M3.8 7.2 L6 9.4 L10.2 5" stroke="#1d8102" stroke-width="1.8" fill="none"/></svg>
<div id="t88" class="t" style="left:903.75px;top:950.10px;font-size:13px;line-height:13px;font-weight:normal;color:#1d8102;font-family:'Liberation Sans', sans-serif;letter-spacing:-0.406px;">사용 가능</div>
<div id="t89" class="t" style="left:1079.6px;top:951.10px;font-size:13px;line-height:13px;font-weight:normal;color:#16191f;font-family:'Liberation Sans', sans-serif;letter-spacing:0.045px;">192.168.3.95</div>
<div id="t90" class="t" style="left:1272.5px;top:951.10px;font-size:13px;line-height:13px;font-weight:normal;color:#16191f;font-family:'Liberation Sans', sans-serif;letter-spacing:0.102px;">eni-04ff65a460ec0130c</div>
<div id="t91" class="t" style="left:1465px;top:951.10px;font-size:13px;line-height:13px;font-weight:normal;color:#16191f;font-family:'Liberation Sans', sans-serif;letter-spacing:-0.227px;">sg-053c05e62ebb41900 (myeks-EFSSG-f8GOXMziUEvt)</div></body></html>
